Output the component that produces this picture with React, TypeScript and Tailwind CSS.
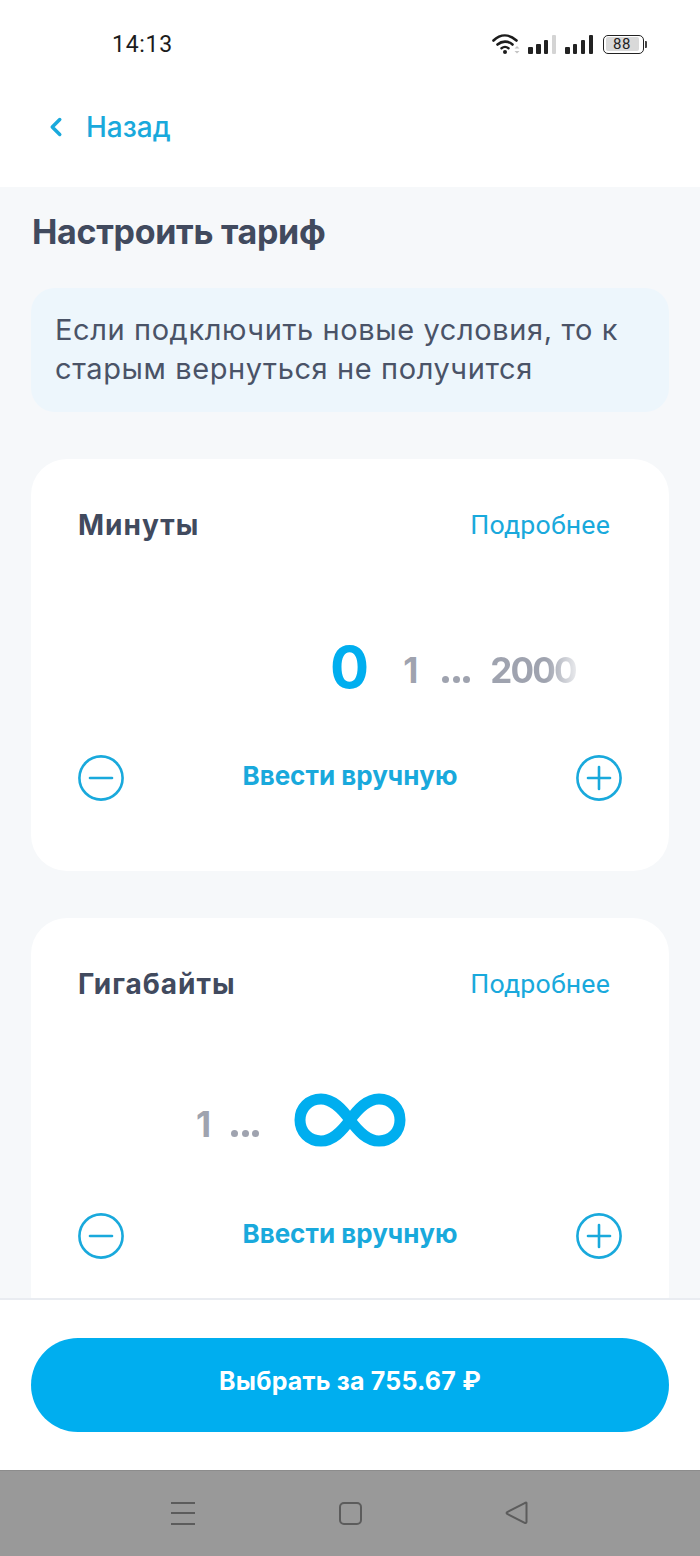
import { ChevronLeft } from "lucide-react";

const blue = "#00aeef";

function WifiIcon() {
  return (
    <svg width="30" height="22" viewBox="0 0 30 22" fill="none">
      <path d="M1.5 7.5C8.5 0.8 17 0.8 24.5 7.5" stroke="#1c1c1c" strokeWidth="2.6" strokeLinecap="round" />
      <path d="M5.5 11.5C10 7.6 16 7.6 20.5 11.5" stroke="#1c1c1c" strokeWidth="2.6" strokeLinecap="round" />
      <path d="M9.5 15.2C11.6 13.6 14.4 13.6 16.5 15.2" stroke="#1c1c1c" strokeWidth="2.4" strokeLinecap="round" />
      <circle cx="13" cy="19" r="2" fill="#1c1c1c" />
      <path d="M22.5 15.5l2.5 -2.6 2.5 2.6z M22.5 18l2.5 2.6 2.5 -2.6z" fill="#c4c4c4" />
    </svg>
  );
}

function SignalBars({ last }: { last: string }) {
  return (
    <div className="flex items-end gap-[3.3px] h-[20px]">
      <div className="w-[4.5px] h-[7px] rounded-[1px] bg-[#222]" />
      <div className="w-[4.5px] h-[10px] rounded-[1px] bg-[#222]" />
      <div className="w-[4.5px] h-[14px] rounded-[1px] bg-[#222]" />
      <div className={`w-[4.5px] h-[19px] rounded-[1px] ${last}`} />
    </div>
  );
}

function StatusBar() {
  return (
    <div className="h-[64px] pt-[24px] pl-[112px] pr-[53px] flex items-start justify-between">
      <span className="text-[23px] leading-[40px] mt-[1px] text-[#1c1c1c] font-['Roboto',sans-serif] tracking-[0.7px]">14:13</span>
      <div className="flex items-center h-[40px]">
        <WifiIcon />
        <div className="ml-[6px]"><SignalBars last="bg-[#d4d4d4]" /></div>
        <div className="ml-[9px]"><SignalBars last="bg-[#222]" /></div>
        <div className="flex items-center ml-[10px]">
          <div className="w-[41px] h-[19px] rounded-[5px] border border-[#222] p-[1.5px]">
            <div className="w-[33px] h-full rounded-[2px] bg-[#d9d9d9] flex items-center justify-center text-[15px] leading-none text-[#222] font-['Roboto',sans-serif] tracking-[0.5px]">88</div>
          </div>
          <div className="w-[2px] h-[7px] ml-[1px] bg-[#444] rounded-r-[1px]" />
        </div>
      </div>
    </div>
  );
}

function RoundButton({ plus }: { plus?: boolean }) {
  return (
    <svg width="46" height="46" viewBox="0 0 46 46" fill="none" stroke="#19a9dc" strokeWidth="2.6" strokeLinecap="round">
      <circle cx="23" cy="23" r="21.6" />
      <path d="M12 23H34" />
      {plus && <path d="M23 12V34" />}
    </svg>
  );
}

function Dots() {
  return (
    <div className="flex gap-[3.5px]">
      <div className="w-[7px] h-[7px] rounded-full bg-[#9fa3af]" />
      <div className="w-[7px] h-[7px] rounded-full bg-[#9fa3af]" />
      <div className="w-[7px] h-[7px] rounded-full bg-[#9fa3af]" />
    </div>
  );
}

function Controls() {
  return (
    <div className="flex items-center justify-between">
      <RoundButton />
      <span className="text-[26px] leading-[30px] font-bold text-[#19a9dc] -mt-[4px]">Ввести вручную</span>
      <RoundButton plus />
    </div>
  );
}

function CardHeader({ title }: { title: string }) {
  return (
    <div className="flex items-center justify-between pr-[12px]">
      <h2 className="text-[28px] leading-[32px] -mt-[2px] font-bold text-[#414a5e] tracking-[1px]">{title}</h2>
      <a className="text-[26.7px] leading-[32px] -mt-[1px] text-[#19a9dc] font-['Roboto',sans-serif] tracking-[0.2px]">Подробнее</a>
    </div>
  );
}

export default function App() {
  return (
    <div className="h-[1556px] w-[700px] flex flex-col overflow-hidden bg-white font-['Inter',sans-serif]">
      <div className="h-[187px] shrink-0 bg-white">
        <StatusBar />
        <div className="flex items-center pl-[41px] pt-[46px] h-[80px]">
          <ChevronLeft size={30} strokeWidth={2.8} color="#19a9dc" />
          <span className="ml-[15px] text-[28px] leading-[34px] font-medium text-[#19a9dc]">Назад</span>
        </div>
      </div>

      <main className="flex-1 min-h-0 overflow-hidden bg-[#f6f8fa] px-[31px]">
        <h1 className="mt-[25px] text-[34px] leading-[40px] font-bold text-[#414a5e] tracking-[-0.3px] pl-[1px]">Настроить тариф</h1>

        <div className="mt-[36px] h-[124px] rounded-[24px] bg-[#edf6fc] pl-[24px] pt-[22px] text-[29px] leading-[39px] text-[#4a5367] tracking-[0.6px]">
          Если подключить новые условия, то к<br />старым вернуться не получится
        </div>

        <section className="mt-[47px] h-[412px] rounded-[36px] bg-white px-[47px] pt-[51px]">
          <CardHeader title="Минуты" />
          <div className="mt-[94px] h-[64px] flex items-center pl-[253px]">
            <span className="text-[58px] leading-none font-bold text-[#00aeef] -ml-[1px]">0</span>
            <span className="ml-[34px] mt-[6px] flex items-baseline text-[35px] leading-none font-bold text-[#9fa3af]">
              <span>1</span>
              <span className="ml-[24px]"><Dots /></span>
              <span className="ml-[20px] tracking-[-1.8px] bg-gradient-to-r from-[#9fa3af] from-65% to-[#e8e9ec] bg-clip-text text-transparent">2000</span>
            </span>
          </div>
          <div className="mt-[56px]">
            <Controls />
          </div>
        </section>

        <section className="mt-[47px] h-[412px] rounded-[36px] bg-white px-[47px] pt-[51px]">
          <CardHeader title="Гигабайты" />
          <div className="mt-[89px] h-[64px] flex items-center pl-[118px]">
            <span className="mt-[6px] flex items-baseline text-[35px] leading-none font-bold text-[#9fa3af]">
              <span>1</span>
              <span className="ml-[20px]"><Dots /></span>
            </span>
            <svg className="ml-[35px] -mt-[2px]" width="112" height="54" viewBox="0 0 112 54" fill="none">
              <path
                d="M56 27C48 16 39 6 27 6C15 6 6 15 6 27C6 39 15 48 27 48C39 48 48 38 56 27C64 16 73 6 85 6C97 6 106 15 106 27C106 39 97 48 85 48C73 48 64 38 56 27Z"
                stroke={blue}
                strokeWidth="11"
              />
            </svg>
          </div>
          <div className="mt-[60px]">
            <Controls />
          </div>
        </section>
      </main>

      <div className="h-[172px] shrink-0 border-t-2 border-[#e9ecf1] bg-white px-[31px] pt-[38px]">
        <button className="w-full h-[94px] pb-[6px] rounded-full bg-[#00aeef] text-white text-[25px] font-bold tracking-[0.2px]">
          Выбрать за 755.67 ₽
        </button>
      </div>

      <nav className="h-[86px] shrink-0 bg-[#999999] border-t border-[#8c8c8c] flex items-center justify-between pl-[171px] pr-[171px]">
        <div className="flex flex-col gap-[8.5px] w-[24px] -mt-[1px]">
          <div className="h-[2px] bg-[#5c5c5c]" />
          <div className="h-[2px] bg-[#5c5c5c]" />
          <div className="h-[2px] bg-[#5c5c5c]" />
        </div>
        <div className="w-[23px] h-[23px] rounded-[5px] border-2 border-[#5c5c5c] -mt-[1px]" />
        <svg width="24" height="24" viewBox="0 0 24 24" fill="none" className="-mt-[1px]">
          <path d="M21.5 2.2V20.8C21.5 21.8 20.6 22.3 19.7 21.9L2.2 12.9C1.4 12.5 1.4 11.5 2.2 11.1L19.7 2.1C20.6 1.7 21.5 1.2 21.5 2.2Z" stroke="#5c5c5c" strokeWidth="2" />
        </svg>
      </nav>
    </div>
  );
}
